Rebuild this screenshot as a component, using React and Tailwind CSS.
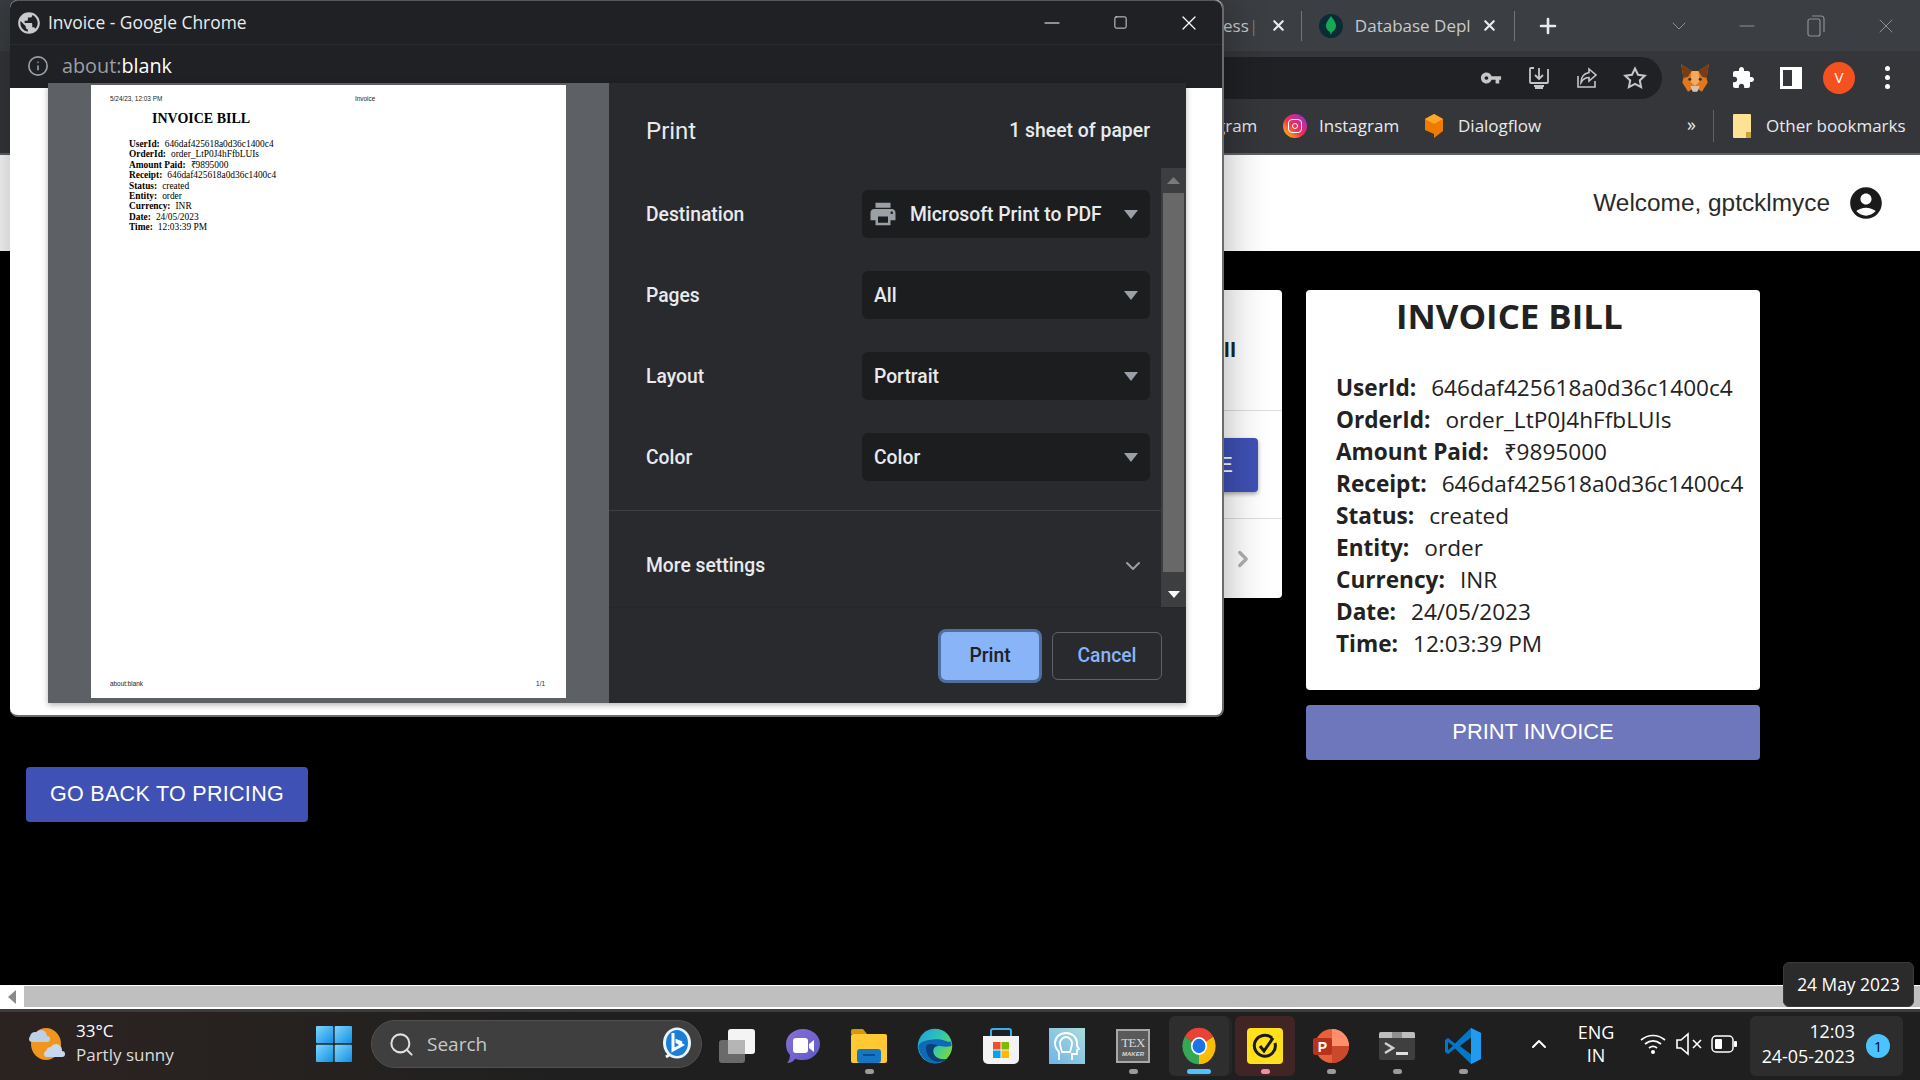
import React from "react";
import { Info, X, Plus, ChevronDown, ChevronRight, ChevronUp, Search, Minus, Square } from "lucide-react";

const Mat = ({ d, size = 24, color = "currentColor" }) => (
  <svg width={size} height={size} viewBox="0 0 24 24" fill={color}><path d={d} /></svg>
);
const P = {
  printer: "M19 8H5c-1.66 0-3 1.34-3 3v6h4v4h12v-4h4v-6c0-1.66-1.34-3-3-3zm-3 11H8v-5h8v5zm3-7c-.55 0-1-.45-1-1s.45-1 1-1 1 .45 1 1-.45 1-1 1zm-1-9H6v4h12V3z",
  user: "M12 2C6.48 2 2 6.48 2 12s4.48 10 10 10 10-4.48 10-10S17.52 2 12 2zm0 4c1.93 0 3.5 1.57 3.5 3.5S13.93 13 12 13s-3.5-1.57-3.5-3.5S10.07 6 12 6zm0 14c-2.03 0-4.43-.82-6.14-2.88C7.55 15.8 9.68 15 12 15s4.45.8 6.14 2.12C16.43 19.18 14.03 20 12 20z",
  puzzle: "M20.5 11H19V7c0-1.1-.9-2-2-2h-4V3.5C13 2.12 11.88 1 10.5 1S8 2.12 8 3.5V5H4c-1.1 0-1.99.9-1.99 2v3.8H3.5c1.49 0 2.7 1.21 2.7 2.7s-1.21 2.7-2.7 2.7H2V20c0 1.1.9 2 2 2h3.8v-1.5c0-1.49 1.21-2.7 2.7-2.7 1.49 0 2.7 1.21 2.7 2.7V22H17c1.1 0 2-.9 2-2v-4h1.5c1.38 0 2.5-1.12 2.5-2.5S21.88 11 20.5 11z",
  key: "M12.65 10C11.83 7.67 9.61 6 7 6c-3.31 0-6 2.69-6 6s2.69 6 6 6c2.61 0 4.83-1.67 5.65-4H17v4h4v-4h2v-4H12.65zM7 14c-1.1 0-2-.9-2-2s.9-2 2-2 2 .9 2 2-.9 2-2 2z",
  globe: "M12 2C6.48 2 2 6.48 2 12s4.48 10 10 10 10-4.48 10-10S17.52 2 12 2zm-1 17.93c-3.95-.49-7-3.85-7-7.93 0-.62.08-1.21.21-1.79L9 15v1c0 1.1.9 2 2 2v1.93zm6.9-2.54c-.26-.81-1-1.39-1.9-1.39h-1v-3c0-.55-.45-1-1-1H8v-2h2c.55 0 1-.45 1-1V7h2c1.1 0 2-.9 2-2v-.41c2.93 1.19 5 4.06 5 7.41 0 2.08-.8 3.97-2.1 5.39z",
};

const Caret = ({ color = "#9aa0a6" }) => (
  <svg width="14" height="9" viewBox="0 0 14 9" className="mt-[2px]"><path d="M0 0h14L7 9z" fill={color} /></svg>
);

const ChromeLogo = () => (
  <svg width="36" height="40" viewBox="0 0 24 24" preserveAspectRatio="none">
    <path d="M12 12L2.47 6.5A11 11 0 0 1 21.53 6.5z" fill="#ea4335" />
    <path d="M12 12L21.53 6.5A11 11 0 0 1 12 23z" fill="#fbbc04" />
    <path d="M12 12L12 23A11 11 0 0 1 2.47 6.5z" fill="#34a853" />
    <circle cx="12" cy="12" r="5.4" fill="#fff" />
    <circle cx="12" cy="12" r="4.3" fill="#1a73e8" />
  </svg>
);

const Edge = () => (
  <svg width="36" height="36" viewBox="0 0 24 24">
    <defs>
      <linearGradient id="eg" x1="0" y1="0" x2="1" y2="0.6"><stop offset="0" stopColor="#1b9de2" /><stop offset="0.6" stopColor="#33c6b0" /><stop offset="1" stopColor="#74d64a" /></linearGradient>
    </defs>
    <circle cx="12" cy="12" r="11.5" fill="url(#eg)" />
    <path d="M1 12C1 18 6 23.5 12 23.5c3 0 6-1 8-3-3 1-7 0-8.500-2.500C10 15 11 12 14 12c2 0 5 1 9 0 0-1 0-2-.5-3-2 1-5-2-10-1.500C6 8 2 9 1 12z" fill="#0c6ab8" />
    <path d="M6 13c0 5 3 9 8 9.500 2 0 4-.5 6-2-3 1-7 0-8.500-2.500C10 15 11 12 14 12c-3-2-8-2-8 1z" fill="#0a3f78" />
  </svg>
);

const Taskbar = () => {
  const Cell = ({ children, dot, box }) => (
    <div className="w-[66px] h-[60px] flex items-stretch justify-center">
      <div className={`w-[60px] h-[60px] rounded-md flex flex-col items-center pt-[9px] ${box || ""}`}>
        <div className="h-[42px] flex items-center justify-center">{children}</div>
        <div className="flex-1 flex items-end pb-[2px]">
          {dot && <div className={dot} />}
        </div>
      </div>
    </div>
  );
  const gray = "w-[9px] h-[5px] rounded-full bg-[#9b9b9b]";
  return (
    <div className="h-[71px] border-t-[3px] border-[#3c3c3c] flex items-center pb-[4px] text-white bg-[linear-gradient(90deg,#2c2321_0%,#262220_15%,#1f1f1f_30%,#1f1f1f_100%)] font-['Open_Sans',sans-serif] shrink-0">
      <div className="w-[29px] shrink-0" />
      <svg width="36" height="34" viewBox="0 0 36 34" className="shrink-0">
        <ellipse cx="17" cy="17" rx="15" ry="16" fill="#f0951e" />
        <g fill="#bcd0e8"><circle cx="6" cy="10" r="5" /><circle cx="12" cy="9" r="6" /><rect x="0" y="9" width="21" height="6" rx="3" /></g>
        <g fill="#c8d8ec"><circle cx="22" cy="25" r="5" /><circle cx="27" cy="23" r="6" /><rect x="15" y="24" width="21" height="6" rx="3" /></g>
      </svg>
      <div className="w-[11px] shrink-0" />
      <div className="w-[240px] shrink-0 flex flex-col leading-[24px] -mt-[3px]">
        <span className="text-[17px]">33°C</span>
        <span className="text-[#dcdcdc] text-[17px]">Partly sunny</span>
      </div>
      <svg width="36" height="36" viewBox="0 0 36 36" className="shrink-0">
        <defs>
          <linearGradient id="wg" x1="0" y1="0" x2="1" y2="1"><stop offset="0" stopColor="#7fd6fb" /><stop offset="1" stopColor="#0f8fe6" /></linearGradient>
        </defs>
        <rect x="0" y="0" width="17.300" height="17.300" rx="1" fill="url(#wg)" />
        <rect x="18.700" y="0" width="17.300" height="17.300" rx="1" fill="url(#wg)" />
        <rect x="0" y="18.700" width="17.300" height="17.300" rx="1" fill="url(#wg)" />
        <rect x="18.700" y="18.700" width="17.300" height="17.300" rx="1" fill="url(#wg)" />
      </svg>
      <div className="w-[19px] shrink-0" />
      <div className="w-[331px] h-[48px] rounded-full bg-[#3f3f3f] border border-[#505050] flex items-center pl-[16px] pr-[9px] shrink-0">
        <Search size={27} strokeWidth={1.8} color="#e0e0e0" />
        <span className="ml-[12px] text-[19px] text-[#c8c8c8] flex-1">Search</span>
        <svg width="30" height="34" viewBox="0 0 30 34">
          <ellipse cx="15" cy="16" rx="14" ry="15.500" fill="#eaf6ff" />
          <path d="M4 30l6-4" stroke="#eaf6ff" strokeWidth="3" />
          <ellipse cx="15" cy="16" rx="11" ry="13" fill="#1a7fd8" />
          <path d="M11 6v17l9-5-5-3 0-1 5 2" fill="none" stroke="#fff" strokeWidth="3" />
        </svg>
      </div>
      <div className="w-[2px] shrink-0" />
      <div className="flex shrink-0 -mb-[4px]">
        <Cell>
          <svg width="36" height="34" viewBox="0 0 36 34">
            <rect x="0" y="11" width="26" height="23" rx="3" fill="#6a6a6a" />
            <rect x="9" y="0" width="27" height="25" rx="3" fill="#f4f4f4" />
            <rect x="9" y="11" width="17" height="14" fill="#b5b5b5" />
          </svg>
        </Cell>
        <Cell>
          <svg width="34" height="34" viewBox="0 0 34 34">
            <defs><linearGradient id="mg" x1="0" y1="0" x2="1" y2="1"><stop offset="0" stopColor="#8b6fd8" /><stop offset="1" stopColor="#5b5ac4" /></linearGradient></defs>
            <path d="M17 0c10 0 17 7 17 15s-7 16-17 16c-3 0-6-.5-8-1-2 3-5 4-8 4 2-2 3-5 3-8-3-3-4-7-4-11C0 7 7 0 17 0z" fill="url(#mg)" />
            <rect x="7" y="9" width="15" height="15" rx="3" fill="#fff" />
            <path d="M23 15l5-4v12l-5-4z" fill="#fff" />
          </svg>
        </Cell>
        <Cell dot={gray}>
          <svg width="36" height="34" viewBox="0 0 36 34">
            <path d="M0 2a2 2 0 0 1 2-2h10l4 5h-16z" fill="#d49a06" />
            <rect x="0" y="5" width="36" height="29" rx="2" fill="#ffc933" />
            <rect x="6" y="20" width="24" height="14" rx="3" fill="#1476c6" />
            <rect x="12" y="25" width="12" height="2" fill="#0c4f8f" />
          </svg>
        </Cell>
        <Cell><Edge /></Cell>
        <Cell>
          <svg width="36" height="36" viewBox="0 0 36 36">
            <path d="M8 8V3a2 2 0 0 1 2-2h16a2 2 0 0 1 2 2v5" fill="none" stroke="#36b0ee" strokeWidth="2" />
            <path d="M0 8h36v23a5 5 0 0 1-5 5H5a5 5 0 0 1-5-5z" fill="#f3f3f3" />
            <rect x="10" y="14" width="7.500" height="7.500" fill="#f25022" />
            <rect x="18.500" y="14" width="7.500" height="7.500" fill="#7fba00" />
            <rect x="10" y="22.500" width="7.500" height="7.500" fill="#00a4ef" />
            <rect x="18.500" y="22.500" width="7.500" height="7.500" fill="#ffb900" />
          </svg>
        </Cell>
        <Cell>
          <svg width="36" height="36" viewBox="0 0 36 36">
            <defs><linearGradient id="cg" x1="1" y1="0" x2="0" y2="1"><stop offset="0" stopColor="#a9dcd9" /><stop offset="1" stopColor="#6fb4ea" /></linearGradient></defs>
            <rect width="36" height="36" fill="url(#cg)" />
            <path d="M10 32V24C7 21 6 18 6 15 6 9 11 5 17 5c6 0 11 4 11 10v3l2 3-2 1v4h-5v6M13 24c-1-3-2-6-2-9 0-3 3-6 6-6s6 3 6 6c0 3-1 6-2 9z" fill="none" stroke="#fff" strokeWidth="1.800" />
          </svg>
        </Cell>
        <Cell dot={gray}>
          <div className="w-[34px] h-[34px] bg-[#5a5a5a] border-2 border-[#a8a8a8] flex flex-col items-center justify-center leading-none text-[#d8d8d8] font-['Liberation_Serif',serif]">
            <span className="text-[13px] tracking-tighter">TEX</span>
            <span className="text-[6px] font-bold font-['Liberation_Sans',sans-serif] italic mt-[2px]">MAKER</span>
          </div>
        </Cell>
        <Cell box="bg-[#2e2e2e] shadow-[3px_0_0_#262626]" dot="w-[24px] h-[5px] rounded-full bg-[#4cc2ff]"><ChromeLogo /></Cell>
        <Cell box="bg-[#412424]" dot="w-[9px] h-[5px] rounded-full bg-[#f78ca0]">
          <div className="w-[36px] h-[36px] rounded-[4px] bg-[#ffe01b] flex items-center justify-center">
            <svg width="26" height="26" viewBox="0 0 26 26" fill="none" stroke="#1a1a1a" strokeWidth="3">
              <path d="M20 5a10.500 10.500 0 1 0 3 5" />
              <path d="M8 13l4 5 9-13" />
            </svg>
          </div>
        </Cell>
        <Cell dot={gray}>
          <svg width="36" height="34" viewBox="0 0 36 34">
            <circle cx="19" cy="17" r="17" fill="#e8613a" />
            <path d="M19 0a17 17 0 0 1 17 17H19z" fill="#ff8f6b" />
            <path d="M19 17h17a17 17 0 0 1-17 17z" fill="#c9492a" />
            <rect x="0" y="9" width="19" height="17" rx="2" fill="#b7321a" />
            <text x="9.500" y="22.500" textAnchor="middle" fontSize="14" fontWeight="700" fill="#fff" fontFamily="Liberation Sans">P</text>
          </svg>
        </Cell>
        <Cell dot={gray}>
          <svg width="36" height="28" viewBox="0 0 36 28">
            <rect width="36" height="28" rx="2" fill="#3f3f3f" />
            <path d="M2 0h32a2 2 0 0 1 2 2v4H0V2a2 2 0 0 1 2-2z" fill="#bdbdbd" />
            <rect x="13" y="0" width="10" height="6" fill="#8f8f8f" />
            <path d="M6 11l8 5-8 5" fill="none" stroke="#cfcfcf" strokeWidth="2.500" />
            <rect x="17" y="20" width="12" height="3" fill="#e0e0e0" />
          </svg>
        </Cell>
        <Cell dot={gray}>
          <svg width="36" height="36" viewBox="0 0 36 36">
            <path d="M26 0l10 5v26l-10 5L10 20.500 3 26l-3-2v-12l3-2 7 5.500z" fill="#0078c8" />
            <path d="M26 0l10 5v26l-10 5z" fill="#1f9cf0" />
            <path d="M26 9.500v17L15 18z" fill="#1f1f1f" />
            <path d="M3 14l5 4-5 4z" fill="#1f1f1f" />
          </svg>
        </Cell>
      </div>
      <div className="w-[31px] shrink-0" />
      <ChevronUp size={24} strokeWidth={2} color="#fff" className="shrink-0" />
      <div className="w-[10px] shrink-0" />
      <div className="w-[70px] flex flex-col items-center text-[18px] leading-[23px] shrink-0">
        <span>ENG</span><span>IN</span>
      </div>
      <div className="w-[9px] shrink-0" />
      <svg width="26" height="22" viewBox="0 0 26 22" fill="none" stroke="#fff" strokeWidth="1.700" className="shrink-0">
        <path d="M1 7c7-6 17-6 24 0M5 11c5-4 11-4 16 0M9 15c2.500-2 5.500-2 8 0" />
        <circle cx="13" cy="19" r="2" fill="#fff" stroke="none" />
      </svg>
      <div className="w-[10px] shrink-0" />
      <svg width="26" height="24" viewBox="0 0 26 24" fill="none" stroke="#fff" strokeWidth="1.600" className="shrink-0">
        <path d="M1 8h4l7-6v20l-7-6H1z" />
        <path d="M17 8l8 8M25 8l-8 8" />
      </svg>
      <div className="w-[9px] shrink-0" />
      <svg width="26" height="18" viewBox="0 0 26 18" className="shrink-0">
        <rect x="1" y="1" width="21" height="16" rx="4" fill="none" stroke="#fff" strokeWidth="1.500" />
        <rect x="4" y="4" width="7" height="10" rx="1" fill="#fff" />
        <rect x="23" y="6" width="3" height="6" rx="1" fill="#fff" />
      </svg>
      <div className="w-[13px] shrink-0" />
      <div className="w-[153px] h-[60px] rounded-md bg-[#2d2d2d] flex items-center pr-[12px] shrink-0 -mb-[4px]">
        <div className="w-[105px] flex flex-col items-end text-[17.900px] leading-[25px] -mt-[4px]">
          <span>12:03</span><span className="whitespace-nowrap">24-05-2023</span>
        </div>
        <div className="ml-[11px] w-[24px] h-[24px] rounded-full bg-[#4cc2ff] text-black text-[14px] flex items-center justify-center">1</div>
      </div>
    </div>
  );
};

const TopBar = () => {
  const Btn = ({ children }) => <div className="w-[48px] flex items-center justify-center shrink-0">{children}</div>;
  return (
    <>
      <div className="h-[51px] bg-[#3b3e42] flex items-center pl-[1223px] text-[#c8cacc] font-['Open_Sans',sans-serif] shrink-0">
        <span className="w-[26px] text-[17px]">ess</span>
        <span className="text-[#777] text-[17px]">|</span>
        <div className="w-[28.500px] flex justify-end"><X size={17} strokeWidth={3} color="#e8eaed" /></div>
        <div className="w-[14px]" />
        <div className="w-[1px] h-[30px] bg-[#72767b]" />
        <div className="w-[17px]" />
        <div className="w-[24px] h-[24px] rounded-full bg-[#0b2b35] flex items-center justify-center">
          <svg width="10" height="19" viewBox="0 0 10 19"><path d="M5 0c2 3 5 6 5 10 0 3-2 5-4 6l-1 3-1-3c-2-1-4-3-4-6 0-4 3-7 5-10z" fill="#13aa52" /></svg>
        </div>
        <div className="w-[12px]" />
        <div className="w-[121px] whitespace-nowrap text-[17px]">Database Depl</div>
        <div className="w-[30px] flex justify-center -ml-[1px]"><X size={17} strokeWidth={3} color="#e8eaed" /></div>
        <div className="w-[9px]" />
        <div className="w-[1px] h-[30px] bg-[#72767b]" />
        <div className="w-[21px]" />
        <Plus size={24} strokeWidth={2.600} color="#e8eaed" />
        <div className="w-[107px]" />
        <ChevronDown size={24} strokeWidth={1} color="#8d9094" />
        <div className="w-[44px]" />
        <Minus size={24} strokeWidth={1} color="#8d9094" />
        <div className="w-[48px]" />
        <svg width="18" height="24" viewBox="0 0 18 24" fill="none" stroke="#8d9094" strokeWidth="1.200">
          <rect x="1" y="5" width="12" height="17" rx="2" />
          <path d="M5 2h9a3 3 0 0 1 3 3v13" />
        </svg>
        <div className="w-[49px]" />
        <X size={24} strokeWidth={1} color="#8d9094" />
      </div>
      <div className="h-[53px] bg-[#35363a] flex items-center justify-end pr-[9px] shrink-0">
        <div className="w-[600px] h-[42px] rounded-l-none rounded-r-full bg-[#202124] flex items-center justify-end pr-[3px] mr-[9px]">
          <Btn><Mat d={P.key} size={22} color="#c4c7c5" /></Btn>
          <Btn>
            <svg width="24" height="24" viewBox="0 0 24 24" fill="none" stroke="#c4c7c5" strokeWidth="1.800">
              <path d="M7 2H4a1 1 0 0 0-1 1v13a1 1 0 0 0 1 1h16a1 1 0 0 0 1-1V3" />
              <path d="M12 2v10M8 9l4 4 4-4M8 22h8M7 20h10" />
            </svg>
          </Btn>
          <Btn>
            <svg width="24" height="24" viewBox="0 0 24 24" fill="none" stroke="#c4c7c5" strokeWidth="1.600">
              <path d="M3 10v11h17v-6" />
              <path d="M14 3l7 6-7 6v-3.500c-4 0-6 1.500-8 5 0-6 3-9 8-10z" />
            </svg>
          </Btn>
          <Btn>
            <svg width="24" height="24" viewBox="0 0 24 24" fill="none" stroke="#c4c7c5" strokeWidth="2"><path d="M12 2.500l3 6.300 6.800.9-5 4.700 1.300 6.800-6.100-3.400-6.100 3.400 1.300-6.800-5-4.700 6.800-.9z" /></svg>
          </Btn>
        </div>
        <Btn>
          <svg width="30" height="30" viewBox="0 0 26 26">
            <path d="M1 1l9 6h6l9-6-2 12 1 4-5 8-3-2H10l-3 2-5-8 1-4z" fill="#e2761b" />
            <path d="M10 7h6l1 9-4 4-4-4z" fill="#f6a85c" />
            <path d="M1 1l9 6-3 5-4 1zM25 1l-9 6 3 5 4 1z" fill="#763d16" />
            <path d="M9 20h8l-2 5h-4z" fill="#d7c1b3" />
            <circle cx="8.500" cy="14" r="1.300" fill="#233447" /><circle cx="17.500" cy="14" r="1.300" fill="#233447" />
          </svg>
        </Btn>
        <Btn><Mat d={P.puzzle} size={24} color="#fff" /></Btn>
        <Btn>
          <svg width="22" height="22" viewBox="0 0 22 22"><rect width="22" height="22" fill="#fff" /><rect x="3" y="3" width="9" height="16" fill="#35363a" /></svg>
        </Btn>
        <Btn>
          <div className="w-[32px] h-[32px] rounded-full bg-[#f4511e] text-white text-[15px] flex items-center justify-center font-['Open_Sans',sans-serif]">V</div>
        </Btn>
        <Btn>
          <div className="flex flex-col gap-[4px]">
            <div className="w-[5px] h-[5px] rounded-full bg-white" />
            <div className="w-[5px] h-[5px] rounded-full bg-white" />
            <div className="w-[5px] h-[5px] rounded-full bg-white" />
          </div>
        </Btn>
      </div>
      <div className="h-[51px] bg-[#35363a] border-b-[2px] border-[#5f6164] flex items-center pb-[6px] pl-[1216px] text-[#e8eaed] text-[17px] font-['Open_Sans',sans-serif] shrink-0 whitespace-nowrap">
        <span className="w-[35px]">gram</span>
        <div className="w-[32px]" />
        <div className="w-[24px] h-[24px] rounded-full bg-[linear-gradient(45deg,#fdc70a_5%,#f0304f_45%,#c32aa3_75%,#6a35e0)] flex items-center justify-center">
          <div className="w-[14px] h-[14px] rounded-[4px] border-[1.500px] border-white flex items-center justify-center"><div className="w-[6px] h-[6px] rounded-full border border-white" /></div>
        </div>
        <div className="w-[12px]" />
        <span className="w-[79px]">Instagram</span>
        <div className="w-[27px]" />
        <svg width="18" height="24" viewBox="0 0 18 24"><path d="M9 0l9 5v12l-9 7v-4l-9-4V5z" fill="#ef7a00" /><path d="M9 0l9 5-9 5-9-5z" fill="#ffa726" /></svg>
        <div className="w-[15px]" />
        <span className="w-[86px]">Dialogflow</span>
        <div className="w-[143px]" />
        <span className="w-[12px] text-[18px] leading-none -mt-[4px]">»</span>
        <div className="w-[14px]" />
        <div className="w-[1px] h-[32px] bg-[#5f6368]" />
        <div className="w-[19px]" />
        <svg width="18" height="24" viewBox="0 0 18 24"><rect width="18" height="24" rx="1" fill="#fde293" /><path d="M13 18h5v6h-5z" fill="#c9a43c" /></svg>
        <div className="w-[15px]" />
        <span>Other bookmarks</span>
      </div>
    </>
  );
};

const rows = [
  ["UserId:", "646daf425618a0d36c1400c4"],
  ["OrderId:", "order_LtP0J4hFfbLUIs"],
  ["Amount Paid:", "₹9895000"],
  ["Receipt:", "646daf425618a0d36c1400c4"],
  ["Status:", "created"],
  ["Entity:", "order"],
  ["Currency:", "INR"],
  ["Date:", "24/05/2023"],
  ["Time:", "12:03:39 PM"],
];

const Select = ({ children }) => (
  <div className="w-[288px] h-[48px] rounded-[6px] bg-[#1c1d1f] flex items-center text-[#e8eaed] text-[19.300px] font-medium pr-[12px]">
    {children}
    <div className="ml-auto"><Caret /></div>
  </div>
);

const Setting = ({ label, children }) => (
  <div className="h-[81px] shrink-0 flex items-center pl-[37px] pr-[11px] text-[#e8eaed] text-[19.300px] font-medium">
    <span className="flex-1 pt-[4px]">{label}</span>
    {children}
  </div>
);

const PrintWindow = () => (
  <div className="absolute left-[10px] top-0 w-[1214px] h-[717px] rounded-lg bg-white border-r-2 border-b-2 border-[#6a6a6a] shadow-[0_0_45px_rgba(0,0,0,0.32)]">
    <div className="h-[88px] rounded-t-lg bg-[#202124] border-t border-[#55585c]">
      <div className="h-[44px] flex items-center text-white font-['Open_Sans',sans-serif] border-b border-[#2a2b2e]">
        <div className="ml-[6px]"><Mat d={P.globe} size={26} color="#c8cacc" /></div>
        <span className="ml-[6px] text-[17.400px] text-[#eceded]">Invoice - Google Chrome</span>
        <div className="ml-auto flex items-center">
          <Minus size={24} strokeWidth={1.100} color="#fff" />
          <div className="w-[49px]" />
          <Square size={15} strokeWidth={1.300} color="#fff" className="rounded-sm" />
          <div className="w-[49px]" />
          <X size={24} strokeWidth={1.200} color="#fff" />
          <div className="w-[21px]" />
        </div>
      </div>
      <div className="h-[38px] flex items-center pt-[4px] font-['Open_Sans',sans-serif] text-[19.800px]">
        <div className="ml-[17px]"><Info size={22} color="#9aa0a6" strokeWidth={1.800} /></div>
        <span className="ml-[13px] text-[#9aa0a6]">about:</span><span className="text-white">blank</span>
      </div>
    </div>
    <div className="ml-[38px] w-[1138px] h-[620px] -mt-[5px] flex shadow-[0_2px_6px_rgba(0,0,0,0.3)]">
      <div className="w-[561px] bg-[#5d6064] pl-[43px] pt-[2px]">
        <div className="w-[475px] h-[613px] bg-white flex flex-col pl-[19px] pr-[21px] text-black">
          <div className="flex pt-[10px] text-[6.400px] leading-[8px] font-['Liberation_Sans',sans-serif] text-[#222]">
            <span className="w-[245px]">5/24/23, 12:03 PM</span><span>Invoice</span>
          </div>
          <div className="pl-[42px] mt-[7px] text-[14px] leading-[18px] font-bold font-['Liberation_Serif',serif]">INVOICE BILL</div>
          <div className="pl-[19px] mt-[11px] text-[9.400px] leading-[10.400px] font-['Liberation_Serif',serif]">
            {rows.map(([k, v]) => (
              <div key={k}><span className="font-bold">{k}</span><span className="ml-[5px]">{v}</span></div>
            ))}
          </div>
          <div className="mt-auto flex justify-between pb-[10px] text-[6.400px] leading-[8px] font-['Liberation_Sans',sans-serif] text-[#222]">
            <span>about:blank</span><span>1/1</span>
          </div>
        </div>
      </div>
      <div className="flex-1 bg-[#292a2d] flex flex-col font-['Roboto',sans-serif]">
        <div className="h-[85px] shrink-0 flex items-center pl-[37px] pr-[36px] pt-[11px]">
          <span className="text-[24px] text-[#e8eaed]">Print</span>
          <span className="ml-auto text-[#e8eaed] text-[19.400px] font-medium">1 sheet of paper</span>
        </div>
        <div className="flex-1 flex min-h-0">
          <div className="flex-1 flex flex-col pt-[5px] min-h-0">
            <Setting label="Destination">
              <Select>
                <div className="ml-[6px]"><Mat d={P.printer} size={30} color="#9aa0a6" /></div>
                <span className="ml-[12px] pt-[4px] whitespace-nowrap">Microsoft Print to PDF</span>
              </Select>
            </Setting>
            <Setting label="Pages"><Select><span className="ml-[12px] pt-[4px]">All</span></Select></Setting>
            <Setting label="Layout"><Select><span className="ml-[12px] pt-[4px]">Portrait</span></Select></Setting>
            <Setting label="Color"><Select><span className="ml-[12px] pt-[4px]">Color</span></Select></Setting>
            <div className="h-[1px] shrink-0 bg-[#3f4043] mt-[13px]" />
            <div className="flex items-center pl-[37px] pr-[16px] pt-[14px] h-[96px] shrink-0 text-[#e8eaed] text-[19.300px] font-medium">
              <span className="flex-1">More settings</span>
              <ChevronDown size={24} strokeWidth={2} color="#9aa0a6" />
            </div>
          </div>
          <div className="w-[25px] bg-[#3d3e40] flex flex-col items-center">
            <div className="h-[25px] flex items-center justify-center"><svg width="13" height="7" viewBox="0 0 13 7"><path d="M0 7h13L6.500 0z" fill="#7a7a7a" /></svg></div>
            <div className="w-[21px] h-[379px] bg-[#686868]" />
            <div className="flex-1 flex items-center justify-center pt-[9px]"><svg width="12" height="7" viewBox="0 0 12 7"><path d="M0 0h12L6 7z" fill="#fff" /></svg></div>
          </div>
        </div>
        <div className="h-[96px] shrink-0 flex items-start pt-[21px] pl-[329px] border-t border-[#26272a]">
          <div className="w-[104px] h-[54px] rounded-[8px] bg-[#8ab4f8] border-[3px] border-[#4f6f9f] flex items-center justify-center text-[#202124] text-[19.300px] font-medium">Print</div>
          <div className="ml-[10px] mt-[3px] w-[110px] h-[48px] rounded-[6px] border border-[#5f6368] flex items-center justify-center text-[#8ab4f8] text-[19.300px] font-medium">Cancel</div>
        </div>
      </div>
    </div>
  </div>
);

export default function App() {
  return (
    <div className="relative w-[1920px] h-[1080px] overflow-hidden bg-black flex flex-col">
      <TopBar />
      <div className="h-[96px] bg-white flex items-center justify-end pr-[35px] shrink-0 font-['Liberation_Sans',sans-serif]">
        <span className="text-[24.400px] text-[#2a2a2a]">Welcome, gptcklmyce</span>
        <div className="ml-[17px]"><Mat d={P.user} size={38} color="#1a1a1a" /></div>
      </div>
      <div className="flex-1 bg-black flex items-start pl-[26px] min-h-0">
        <div className="mt-[516px] w-[282px] h-[55px] rounded-[4px] bg-[#3f51b5] text-white text-[21.500px] tracking-[0.3px] font-medium flex items-center justify-center shrink-0 font-['Liberation_Sans',sans-serif]">GO BACK TO PRICING</div>
        <div className="ml-[592px] mt-[39px] w-[382px] h-[308px] rounded-[4px] bg-white flex flex-col shrink-0 font-['Open_Sans',sans-serif]">
          <div className="h-[121px] border-b border-[#dedede] flex items-center justify-end pr-[46px] text-[20px] font-bold text-[#222]">Bill</div>
          <div className="h-[108px] border-b border-[#dedede] flex items-center justify-end pr-[24px]">
            <div className="h-[54px] pl-[20px] pr-[25px] rounded-[4px] bg-[#3f51b5] text-white text-[22px] flex items-center shadow-[0_2px_4px_rgba(0,0,0,0.35)] font-['Liberation_Sans',sans-serif]">CHECKOUT HERE</div>
          </div>
          <div className="flex-1 flex items-center justify-end pr-[26px]"><ChevronRight size={26} strokeWidth={3} color="#b0b0b0" /></div>
        </div>
        <div className="ml-[24px] mt-[39px] w-[454px] shrink-0">
          <div className="h-[400px] rounded-[4px] bg-white font-['Open_Sans',sans-serif] text-[#222]">
            <div className="pl-[90px] pt-[1px] text-[34.800px] leading-[50px] font-bold">INVOICE BILL</div>
            <div className="pl-[30px] mt-[31px] text-[22.600px] leading-[32px] whitespace-nowrap">
              {rows.map(([k, v]) => (
                <div key={k}><span className="font-bold">{k}</span><span className="ml-[15px]">{v}</span></div>
              ))}
            </div>
          </div>
          <div className="mt-[15px] h-[55px] rounded-[4px] bg-[#6f77bc] text-white text-[21.900px] flex items-center justify-center font-['Liberation_Sans',sans-serif]">PRINT INVOICE</div>
        </div>
      </div>
      <div className="h-[24px] bg-white pt-[1px] pb-[2px] flex shrink-0">
        <div className="w-[24px] flex items-center justify-center"><svg width="8" height="14" viewBox="0 0 8 14"><path d="M8 0v14L0 7z" fill="#8a8a8a" /></svg></div>
        <div className="flex-1 bg-[#bfbfbf]" />
      </div>
      <Taskbar />
      <PrintWindow />
      <div className="absolute left-[1783px] top-[962px] w-[131px] h-[45px] rounded-md bg-[#2b2b2b] border border-[#3a3a3a] text-white text-[17.400px] whitespace-nowrap flex items-center justify-center font-['Open_Sans',sans-serif]">24 May 2023</div>
    </div>
  );
}
